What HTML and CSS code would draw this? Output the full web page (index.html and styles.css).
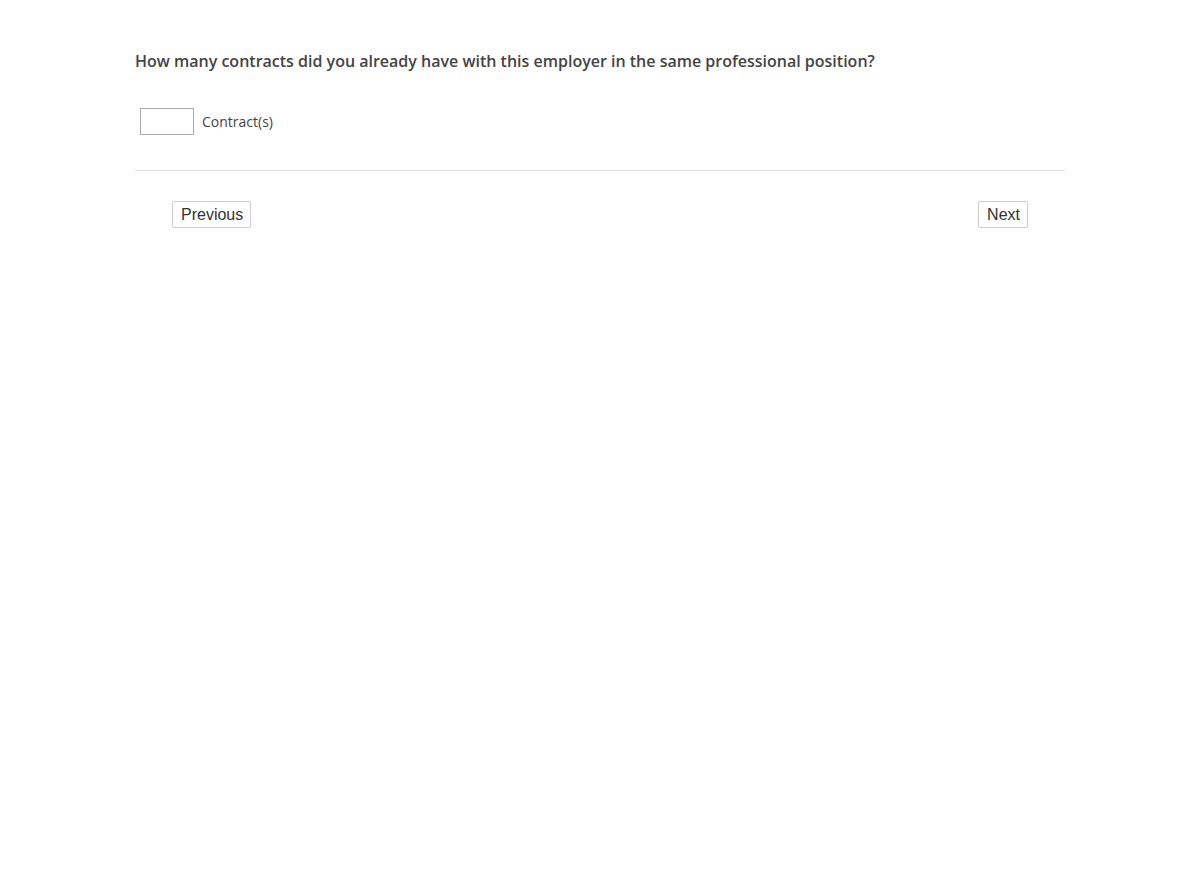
FILE: index.html
```html
<!DOCTYPE html>
<html>
<head>
<meta charset="utf-8">
<link rel="stylesheet" href="styles.css">
</head>
<body>
<div class="page">
  <div class="question">How many contracts did you already have with this employer in the same professional position?</div>
  <div class="answer">
    <input class="num" type="text">
    <span class="unit">Contract(s)</span>
  </div>
  <div class="nav">
    <button class="btn">Previous</button>
    <button class="btn">Next</button>
  </div>
</div>
</body>
</html>
```

FILE: styles.css
```css
html, body {
  margin: 0;
  padding: 0;
  background: #fff;
}
.page {
  width: 930px;
  margin: 0 auto;
  padding-top: 49px;
  font-family: "Open Sans", sans-serif;
  color: #444;
}
.question {
  font-size: 16px;
  font-weight: 600;
  line-height: 24px;
}
.answer {
  display: flex;
  align-items: center;
  gap: 8px;
  padding: 35px 0 35px 5px;
  border-bottom: 1px solid #ddd;
}
.num {
  box-sizing: border-box;
  width: 54px;
  height: 27px;
  border: 1px solid #aaa;
  border-radius: 0;
  margin: 0;
  padding: 2px 4px;
  font-size: 14px;
}
.unit {
  font-size: 14px;
  line-height: 20px;
}
.nav {
  display: flex;
  justify-content: space-between;
  padding: 30px 37px 0 37px;
}
.btn {
  box-sizing: border-box;
  height: 27px;
  padding: 0 7px 0 8px;
  background: #fff;
  border: 1px solid #ccc;
  border-radius: 2px;
  font-family: "Liberation Sans", Arial, sans-serif;
  font-size: 16px;
  color: #333;
  line-height: 25px;
}
```
